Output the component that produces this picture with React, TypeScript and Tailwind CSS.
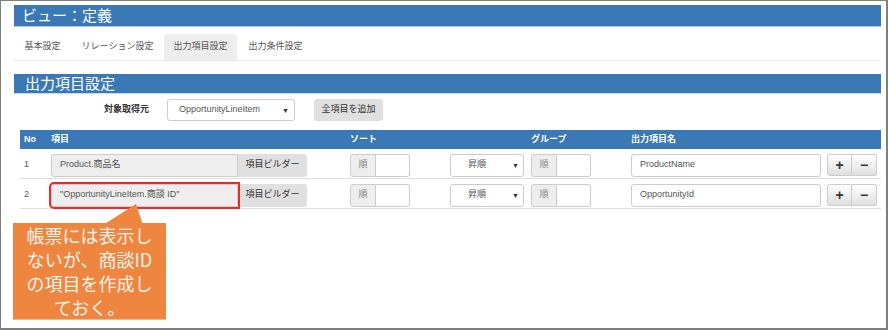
import React from "react";

const FONT = { fontFamily: '"Liberation Sans", "Noto Sans CJK JP", sans-serif' };

function Caret() {
  return <span className="text-[7px] text-[#333] leading-none">▼</span>;
}

function AddonInput({ left }: { left: string }) {
  return (
    <div className="flex h-[23px] w-[60px]">
      <div className="w-[26px] h-full bg-[#eeeeee] border border-[#cccccc] rounded-l-[3px] flex items-center justify-center text-[9px] text-[#888]">
        {left}
      </div>
      <div className="flex-1 h-full bg-white border border-l-0 border-[#cccccc] rounded-r-[3px]" />
    </div>
  );
}

function Row({ no, item, out, highlight }: { no: string; item: string; out: string; highlight?: boolean }) {
  return (
    <div className="flex items-center h-[30px] pt-[3px] border-b border-[#dddddd] text-[9px] text-[#555]">
      <div className="w-[31px] pl-[4px]">{no}</div>
      <div className="w-[299px] flex">
        <div
          className={
            "relative z-10 w-[187px] h-[23px] bg-[#eeeeee] border border-[#cccccc] rounded-l-[3px] flex items-center pl-[8px] " +
            (highlight ? "outline-2 outline-solid outline-[#ea2b2b]" : "")
          }
        >
          {item}
        </div>
        <div className="w-[69px] h-[23px] bg-[#e0e0e0] rounded-r-[3px] flex items-center justify-center text-[#333]">
          項目ビルダー
        </div>
      </div>
      <div className="w-[181px] flex items-center">
        <AddonInput left="順" />
        <div className="ml-[40px] w-[74px] h-[23px] bg-white border border-[#cccccc] rounded-[3px] flex items-center justify-between pl-[17px] pr-[4px]">
          <span>昇順</span>
          <Caret />
        </div>
      </div>
      <div className="w-[100px] flex items-center">
        <AddonInput left="順" />
      </div>
      <div className="w-[196px] flex items-center">
        <div className="w-[190px] h-[23px] bg-white border border-[#cccccc] rounded-[3px] flex items-center pl-[8px]">
          {out}
        </div>
      </div>
      <div className="flex h-[22px]">
        <div className="w-[25px] h-full border border-[#cccccc] rounded-l-[3px] bg-gradient-to-b from-white to-[#e0e0e0] flex items-center justify-center text-[14px] font-bold text-[#333] leading-none">
          +
        </div>
        <div className="w-[25px] h-full border border-l-0 border-[#cccccc] rounded-r-[3px] bg-gradient-to-b from-white to-[#e0e0e0] flex items-center justify-center text-[14px] font-bold text-[#333] leading-none">
          −
        </div>
      </div>
    </div>
  );
}

export default function App() {
  return (
    <div
      className="relative w-[888px] h-[330px] bg-white border-l border-t border-r-2 border-b-2 border-[#7f7f7f] overflow-hidden"
      style={FONT}
    >
      <div className="pl-[13px] pr-[5px] pt-[4px]">
        <div className="h-[22px] bg-[#3a78b6] border-b border-[#a9c9ea] text-white text-[15px] leading-[21px] pl-[8px]">
          ビュー：定義
        </div>

        <div className="mt-[7px] flex h-[27px] border-b border-[#e6e6e6] text-[9px] text-[#555]">
          <div className="w-[57px] h-[26px] flex items-center justify-center">基本設定</div>
          <div className="w-[93px] h-[26px] flex items-center justify-center">リレーション設定</div>
          <div className="w-[73px] h-[26px] flex items-center justify-center bg-[#eeeeee] rounded-t-[3px]">出力項目設定</div>
          <div className="w-[77px] h-[26px] flex items-center justify-center">出力条件設定</div>
        </div>

        <div className="mt-[13px] h-[20px] bg-[#3a78b6] border-b border-[#c5dcf2] text-white text-[15px] leading-[19px] pl-[11px]">
          出力項目設定
        </div>

        <div className="mt-[5px] flex items-center h-[22px] text-[9px]">
          <div className="w-[135px] text-right font-bold text-[#333]">対象取得元</div>
          <div className="ml-[18px] w-[128px] h-[22px] bg-white border border-[#cccccc] rounded-[3px] flex items-center justify-between pl-[11px] pr-[5px] text-[#555]">
            <span>OpportunityLineItem</span>
            <Caret />
          </div>
          <div className="ml-[19px] w-[69px] h-[22px] bg-[#e0e0e0] rounded-[3px] flex items-center justify-center text-[#333]">
            全項目を追加
          </div>
        </div>

        <div className="mt-[9px] ml-[6px]">
          <div className="flex items-center h-[19px] bg-[#3a78b6] text-white text-[9px] font-bold">
            <div className="w-[31px] pl-[4px]">No</div>
            <div className="w-[299px]">項目</div>
            <div className="w-[181px]">ソート</div>
            <div className="w-[100px]">グループ</div>
            <div className="w-[196px]">出力項目名</div>
          </div>
          <Row no="1" item="Product.商品名" out="ProductName" />
          <Row no="2" item={'"OpportunityLineItem.商談 ID"'} out="OpportunityId" highlight />
        </div>
      </div>

      <svg className="absolute left-[99px] top-[202px] z-20" width="46" height="24" viewBox="0 0 46 24">
        <polygon points="36,1 3,22 43,22" fill="#ee8640" />
      </svg>
      <div
        className="absolute left-[12px] top-[222px] z-20 w-[153px] h-[97px] bg-[#ee8640] border-b border-[#f5b98f] text-[#fdf3ec] text-[18px] leading-[24px] text-center"
        style={{ fontFamily: '"Noto Sans CJK JP", sans-serif' }}
      >
        帳票には表示し
        <br />
        ないが、商談ID
        <br />
        の項目を作成し
        <br />
        ておく。
      </div>
    </div>
  );
}
